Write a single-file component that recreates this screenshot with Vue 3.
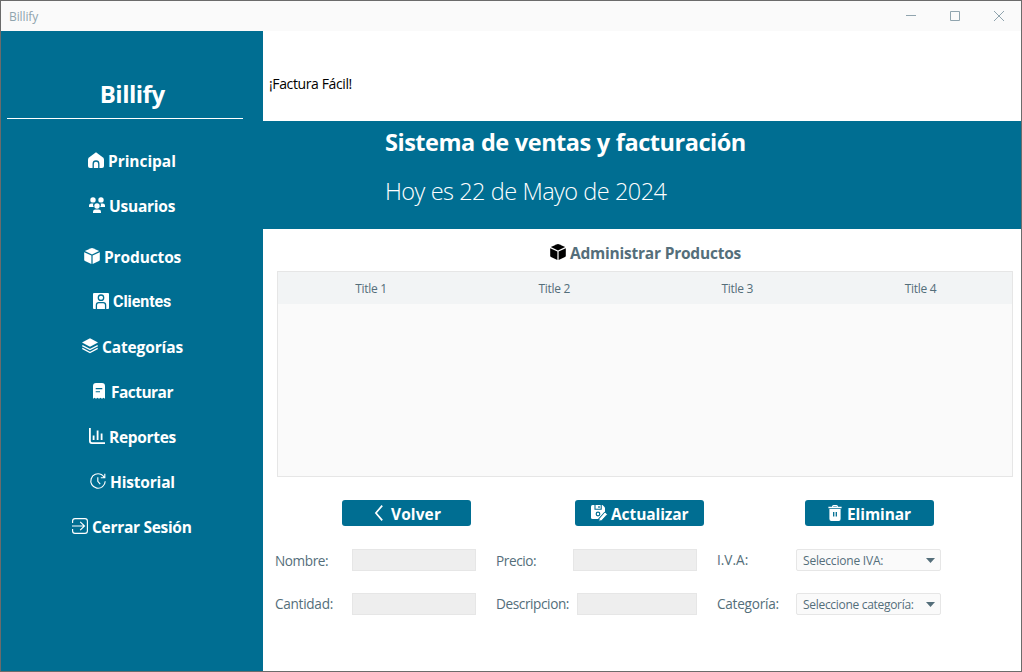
<script setup>
import { h } from 'vue'

const shapes = {
  home: '<path d="M8 .2 15 5.4Q16 6.3 16 7.4V14a2 2 0 0 1-2 2H2a2 2 0 0 1-2-2V7.4Q0 6.3 1 5.4Z" fill="currentColor"/><path d="M5.2 16v-4.2a2.8 2.8 0 0 1 5.6 0V16" fill="none" stroke="#006e92" stroke-width="1.3"/>',
  users: '<g fill="currentColor"><circle cx="4" cy="2.9" r="2.7"/><circle cx="12" cy="2.9" r="2.7"/><path d="M0 10V8.6Q0 6.4 2.2 6.4H4.4Q3.9 7.4 4.1 8.6L4.8 10ZM16 10V8.6Q16 6.4 13.8 6.4H11.6Q12.1 7.4 11.9 8.6L11.2 10Z"/><circle cx="8" cy="9" r="2.7"/><path d="M4 16v-1.2q0-2.4 2.4-2.4h3.2q2.4 0 2.4 2.4V16Z"/></g>',
  box: '<g fill="currentColor"><path d="M7.2.2Q8 -.1 8.8.2L15.2 3.1 8 6.5.8 3.1Z"/><path d="M.2 4.2 7.4 7.5V16L1 12.9Q.2 12.5.2 11.7Z"/><path d="M15.8 4.2 8.6 7.5V16L15 12.9Q15.8 12.5 15.8 11.7Z"/></g>',
  client: '<rect width="16" height="16" rx="1" fill="currentColor"/><g fill="none" stroke="#006e92" stroke-width="1.3"><circle cx="8" cy="4.7" r="2.7"/><path d="M3.4 16v-4q0-2.4 2.4-2.4h4.4q2.4 0 2.4 2.4v4"/></g>',
  layers: '<path d="M8 .2 16 4.5 8 8.8 0 4.5Z" fill="currentColor"/><g fill="none" stroke="currentColor" stroke-width="1.3"><path d="M.3 7.6 8 11.6 15.7 7.6M.3 10.4 8 14.5 15.7 10.4"/></g>',
  receipt: '<path d="M2 15.8V3q0-3 3-3h6q3 0 3 3v12.8l-1.5-1-1.5 1-1.5-1-1.5 1-1.5-1-1.5 1-1.5-1Z" fill="currentColor"/><path d="M4.7 5.6h6.6M4.7 8.8h4.3" stroke="#006e92" stroke-width="1.1"/>',
  chart: '<g fill="none" stroke="currentColor" stroke-width="1.8"><path d="M.9 0V13.1Q.9 15.1 2.9 15.1H16M4.6 7.5V12M8.6 2.5V12M12.6 5.5V12"/></g>',
  history: '<g fill="none" stroke="currentColor" stroke-width="1.15"><path d="M15.2 8.2A7.2 7.2 0 1 1 11.3 1.6Q13 2.5 14.2 4.4M14.8.7V4.7H10.8M7.8 4.2V8.3L10.2 11.2"/></g>',
  logout: '<g fill="none" stroke="currentColor" stroke-width="1.15"><path d="M.6 5V3Q.6.6 3 .6H13Q15.4.6 15.4 3V13Q15.4 15.4 13 15.4H3Q.6 15.4.6 13V11M0 8H12.4M8.2 3.8 12.5 8 8.2 12.2"/></g>',
  back: '<path d="M11.2.6 4.9 8 11.2 15.4" fill="none" stroke="currentColor" stroke-width="1.7"/>',
  save: '<path d="M0 1.5Q0 0 1.5 0H11.5L14 2.5V6.2L7 14H1.5Q0 14 0 12.5Z" fill="currentColor"/><path d="M4 0V4.2H10.2V0" fill="none" stroke="#006e92" stroke-width="1.1"/><path d="M8 1v2" stroke="#006e92" stroke-width="1.2"/><circle cx="7" cy="9" r="1.8" fill="none" stroke="#006e92" stroke-width="1.2"/><path d="M7.8 16.2 8.4 13.3 13.9 7 16.4 9.3 10.8 15.4Z" fill="currentColor" stroke="#006e92" stroke-width=".8"/>',
  trash: '<g fill="currentColor"><path d="M5 1.8Q5 0 6.5 0H9.5Q11 0 11 1.8H14.6V3.3H1.4V1.8ZM6.2 1.8H9.8V1.2H6.2Z" fill-rule="evenodd"/><path d="M2.4 4H13.6V14Q13.6 16 11.6 16H4.4Q2.4 16 2.4 14Z"/></g><path d="M6.7 7V11.5M9.3 7V11.5" stroke="#006e92" stroke-width="1.3"/>'
}

const Icon = (props) => h('svg', { class: 'icon', width: 16, height: 16, viewBox: '0 0 16 16', innerHTML: shapes[props.name] })
Icon.props = ['name']

const menu = [
  ['principal', 'Principal', 'home'],
  ['usuarios', 'Usuarios', 'users'],
  ['productos', 'Productos', 'box'],
  ['clientes', 'Clientes', 'client'],
  ['categorias', 'Categorías', 'layers'],
  ['facturar', 'Facturar', 'receipt'],
  ['reportes', 'Reportes', 'chart'],
  ['historial', 'Historial', 'history'],
  ['cerrar', 'Cerrar Sesión', 'logout']
]
const columns = ['Title 1', 'Title 2', 'Title 3', 'Title 4']
</script>

<template>
  <div class="window">
    <header class="titlebar">
      <span>Billify</span>
      <svg class="controls" width="100" height="12" viewBox="0 0 100 12" fill="none" stroke="#90a4ae">
        <path d="M1 5.5H11M45.5 1.5H54.5V10.5H45.5ZM89 1 99 11M99 1 89 11" />
      </svg>
    </header>
    <div class="body">
      <aside class="sidebar">
        <h1>Billify</h1>
        <nav>
          <a v-for="[id, label, icon] in menu" :key="id" :class="id">
            <Icon :name="icon" /><span>{{ label }}</span>
          </a>
        </nav>
      </aside>
      <main>
        <p class="slogan">¡Factura Fácil!</p>
        <section class="banner">
          <h2>Sistema de ventas y facturación</h2>
          <p>Hoy es 22 de Mayo de 2024</p>
        </section>
        <h3><Icon name="box" /><span>Administrar Productos</span></h3>
        <div class="table">
          <div class="thead"><span v-for="c in columns" :key="c">{{ c }}</span></div>
        </div>
        <div class="actions">
          <button class="volver"><Icon name="back" /><span>Volver</span></button>
          <button class="actualizar"><Icon name="save" /><span>Actualizar</span></button>
          <button class="eliminar"><Icon name="trash" /><span>Eliminar</span></button>
        </div>
        <div class="form">
          <div class="row">
            <label class="c1 nombre">Nombre:</label><i class="field"></i>
            <label class="c2 precio">Precio:</label><i class="field"></i>
            <label class="c3 iva">I.V.A:</label>
            <div class="combo"><span>Seleccione IVA:</span><svg width="9" height="5" viewBox="0 0 9 5"><path d="M0 0H9L4.5 5Z" fill="#546e7a" /></svg></div>
          </div>
          <div class="row second">
            <label class="c1 cantidad">Cantidad:</label><i class="field"></i>
            <label class="c2 descripcion">Descripcion:</label><i class="field short"></i>
            <label class="c3 categoria">Categoría:</label>
            <div class="combo wide"><span>Seleccione categoría:</span><svg width="9" height="5" viewBox="0 0 9 5"><path d="M0 0H9L4.5 5Z" fill="#546e7a" /></svg></div>
          </div>
        </div>
      </main>
    </div>
  </div>
</template>

<style scoped>
* { box-sizing: border-box; margin: 0; padding: 0; }
.window {
  width: 1022px; height: 672px; border: 1px solid #6b6b6b; background: #fff;
  display: flex; flex-direction: column; overflow: hidden;
  font-family: "Open Sans", "Noto Sans", sans-serif; color: #546e7a; white-space: nowrap;
}
.titlebar {
  height: 30px; background: #fafafa; display: flex; align-items: center; justify-content: space-between;
  padding: 0 16px 0 8px; font-size: 12px; letter-spacing: -.1px; color: #90a4ae;
}
.body { flex: 1; display: flex; }
.icon { flex: none; display: block; overflow: visible; }

.sidebar { width: 262px; background: #006e92; color: #fff; padding-left: 6px; }
h1 {
  width: 236px; height: 88px; border-bottom: 1px solid #fff; padding: 48px 0 0 92.7px;
  font-size: 24px; line-height: 30px; letter-spacing: -.5px;
}
nav { padding-top: 30px; font-size: 15.5px; font-weight: 700; }
nav a { display: flex; gap: 4px; height: 24px; line-height: 24px; margin-bottom: 21px; }
nav .icon { margin-top: 3px; }
.principal { padding-left: 81px; letter-spacing: -.05px; }
.usuarios { padding-left: 82px; letter-spacing: -.23px; }
nav .usuarios { margin-bottom: 27px; }
.productos { padding-left: 77px; letter-spacing: -.13px; }
nav .productos { margin-bottom: 20px; }
.clientes { padding-left: 86px; font-family: Roboto, sans-serif; font-size: 16px; letter-spacing: -.07px; }
nav .clientes { margin-bottom: 22px; line-height: 26px; }
nav .clientes .icon { margin-top: 4px; }
.categorias { padding-left: 75px; letter-spacing: -.13px; }
.facturar { padding-left: 84px; letter-spacing: -.53px; }
.reportes { padding-left: 82px; letter-spacing: -.31px; }
.historial { padding-left: 83px; letter-spacing: -.18px; }
.cerrar { padding-left: 65px; letter-spacing: -.3px; }

main { flex: 1; display: flex; flex-direction: column; }
.slogan { height: 90px; padding: 43px 0 0 6px; font-size: 14px; line-height: 20px; letter-spacing: -.38px; color: #000; }
.banner { height: 108px; background: #006e92; color: #fff; padding: 6px 0 0 122px; font-size: 23.5px; }
h2 { font-size: 23.5px; line-height: 30px; letter-spacing: -.48px; word-spacing: .5px; }
.banner p { margin-top: 19px; line-height: 30px; font-weight: 300; letter-spacing: -.53px; word-spacing: .2px; }
h3 { display: flex; gap: 4px; height: 42px; padding: 12px 0 0 287px; font-size: 15.5px; line-height: 24px; letter-spacing: -.22px; }
h3 .icon { color: #000; margin-top: 3px; }
.table { width: 736px; height: 206px; margin-left: 14px; border: 1px solid #e6e6e6; background: #fafafa; }
.thead { display: grid; grid-template-columns: repeat(4, 1fr); height: 32px; line-height: 33px; background: #f2f4f5; font-size: 12px; letter-spacing: -.3px; text-align: center; padding-left: 1.5px; }
.actions { display: flex; gap: 104px; padding: 23px 0 0 79px; }
button {
  width: 129px; height: 26px; border: 0; border-radius: 3px; background: #006e92; color: #fff;
  display: flex; gap: 4px; font: 700 15.5px/28px "Open Sans", sans-serif;
}
button .icon { margin-top: 5px; }
.volver { padding-left: 29px; letter-spacing: .1px; }
.actualizar { padding-left: 16px; letter-spacing: -.08px; }
.eliminar { padding-left: 22px; margin-left: -3px; letter-spacing: -.08px; }
.form { padding: 23px 0 0 12px; display: flex; flex-direction: column; gap: 22px; }
.row { display: flex; height: 22px; }
label { font-size: 13.6px; line-height: 23px; }
.second label { line-height: 21px; }
.c1 { width: 77px; }
.c2 { width: 77px; margin-left: 20px; }
.c3 { width: 79px; margin-left: 20px; }
.short { width: 120px; margin-left: 4px; }
.field { border: 1px solid #e6e6e6; background: #eee; }
.field:not(.short) { width: 124px; }
.nombre { letter-spacing: -.4px; }
.precio { letter-spacing: -.4px; }
.iva { letter-spacing: 0; line-height: 21px; }
.cantidad { letter-spacing: -.28px; }
.descripcion { letter-spacing: -.4px; }
.categoria { letter-spacing: -.25px; }
.combo {
  width: 145px; border: 1px solid #e6e6e6; border-radius: 2px; background: #fafafa;
  display: flex; align-items: center; justify-content: space-between; padding: 0 5px 0 6px;
  font-size: 12px; letter-spacing: -.2px;
}
.combo span { line-height: 20px; padding-top: 2px; }
.combo.wide { letter-spacing: -.3px; }
</style>
